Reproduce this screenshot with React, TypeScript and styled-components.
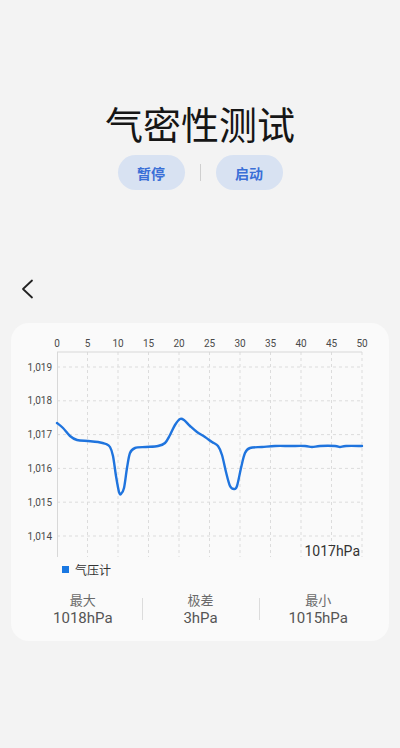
import React from "react";
import styled, { createGlobalStyle } from "styled-components";

const GlobalStyle = createGlobalStyle`
  html, body {
    margin: 0;
    padding: 0;
    background: #f3f3f3;
    font-family: Roboto, "Noto Sans", "Noto Sans CJK SC", sans-serif;
  }
`;

const Page = styled.div`
  width: 400px;
  min-height: 748px;
  display: flex;
  flex-direction: column;
  padding-top: 101px;
  box-sizing: border-box;
`;

const Title = styled.h1`
  margin: 0;
  text-align: center;
  font-family: "Noto Sans CJK SC", sans-serif;
  font-weight: 400;
  font-size: 38px;
  line-height: 44px;
  color: #161616;
`;

const Actions = styled.div`
  margin-top: 10px;
  display: flex;
  justify-content: center;
  align-items: center;
  gap: 15px;
`;

const Pill = styled.button`
  width: 67px;
  height: 35px;
  border: none;
  border-radius: 18px;
  background: #d8e2f2;
  color: #3a6fd7;
  font-family: "Noto Sans CJK SC", sans-serif;
  font-weight: 700;
  font-size: 14px;
  padding: 0;
`;

const Sep = styled.span`
  width: 1px;
  height: 17px;
  background: #cfcfcf;
`;

const Back = styled.button`
  margin: 87px 0 0 17px;
  width: 20px;
  height: 24px;
  padding: 0;
  border: none;
  background: transparent;
  display: flex;
  align-items: center;
  justify-content: center;
  color: #222;
`;

const Card = styled.section`
  margin: 22px 11px 0;
  background: #fafafa;
  border-radius: 18px;
  padding-bottom: 13px;
  display: flex;
  flex-direction: column;
`;

const Legend = styled.div`
  display: flex;
  align-items: center;
  gap: 6px;
  height: 20px;
  padding-left: 51px;
  font-family: "Noto Sans CJK SC", sans-serif;
  font-size: 12px;
  color: #333;
`;

const Swatch = styled.span`
  width: 7px;
  height: 7px;
  background: #1a78e2;
`;

const Stats = styled.div`
  margin-top: 12px;
  display: grid;
  grid-template-columns: 1fr 1fr 1fr;
  padding: 0 12px 0 13px;
`;

const Stat = styled.div<{ $divider?: boolean }>`
  display: flex;
  flex-direction: column;
  align-items: center;
  position: relative;
  ${(p) =>
    p.$divider &&
    `
    &::before {
      content: "";
      position: absolute;
      left: 0;
      top: 7px;
      width: 1px;
      height: 22px;
      background: #dcdcdc;
    }
  `}
`;

const StatLabel = styled.span`
  font-family: "Noto Sans CJK SC", sans-serif;
  font-size: 13px;
  line-height: 18px;
  color: #6a6a6a;
`;

const StatValue = styled.span`
  font-size: 15px;
  line-height: 19px;
  color: #555;
`;

const pts: [number, number][] = [
  [57, 423], [63, 428], [70, 436], [77, 440], [88, 441], [98, 442], [106, 444],
  [110, 447], [113, 456], [116, 476], [119, 492], [121, 494], [124, 488],
  [127, 468], [130, 453], [135, 448], [146, 447], [158, 446], [165, 443],
  [170, 435], [175, 425], [180, 419], [184, 420], [190, 426], [197, 432],
  [205, 437], [212, 442], [218, 446], [222, 455], [226, 472], [230, 486],
  [234, 489], [237, 486], [241, 468], [245, 453], [250, 448], [262, 447],
  [275, 446], [290, 446], [305, 446], [312, 447], [320, 446], [335, 446],
  [340, 447], [346, 446], [362, 446],
];

function smooth(p: [number, number][]) {
  let d = `M${p[0][0]} ${p[0][1]}`;
  for (let i = 0; i < p.length - 1; i++) {
    const p0 = p[i - 1] || p[i];
    const p1 = p[i];
    const p2 = p[i + 1];
    const p3 = p[i + 2] || p2;
    const c1x = p1[0] + (p2[0] - p0[0]) / 6;
    const c1y = p1[1] + (p2[1] - p0[1]) / 6;
    const c2x = p2[0] - (p3[0] - p1[0]) / 6;
    const c2y = p2[1] - (p3[1] - p1[1]) / 6;
    d += ` C${c1x.toFixed(1)} ${c1y.toFixed(1)} ${c2x.toFixed(1)} ${c2y.toFixed(1)} ${p2[0]} ${p2[1]}`;
  }
  return d;
}

const xTicks = [0, 5, 10, 15, 20, 25, 30, 35, 40, 45, 50];
const yTicks = [1019, 1018, 1017, 1016, 1015, 1014];
const xOf = (t: number) => 57 + (t / 50) * 305;
const yOf = (v: number) => 367 + (1019 - v) * 33.8;

function Chart() {
  return (
    <svg width="378" height="236" viewBox="11 323 378 236">
      {xTicks.map((t) => (
        <g key={t}>
          <text x={xOf(t)} y={347} fontSize="10" fill="#4a4a4a" textAnchor="middle" fontFamily="Roboto, sans-serif">
            {t}
          </text>
          {t > 0 && (
            <line x1={xOf(t)} y1={352} x2={xOf(t)} y2={557} stroke="#dcdcdc" strokeDasharray="3 3" />
          )}
        </g>
      ))}
      {yTicks.map((v) => (
        <g key={v}>
          <text x={52} y={yOf(v) + 3.5} fontSize="10" fill="#4a4a4a" textAnchor="end" fontFamily="Roboto, sans-serif">
            {v.toLocaleString("en-US")}
          </text>
          <line x1={57} y1={yOf(v)} x2={362} y2={yOf(v)} stroke="#dcdcdc" strokeDasharray="3 3" />
        </g>
      ))}
      <line x1={57} y1={352} x2={362} y2={352} stroke="#d8d8d8" />
      <line x1={57.5} y1={352} x2={57.5} y2={557} stroke="#d8d8d8" />
      <path d={smooth(pts)} fill="none" stroke="#1f74de" strokeWidth="2.4" strokeLinejoin="round" strokeLinecap="round" />
      <text x={360} y={556} fontSize="14" fill="#333" textAnchor="end" fontFamily="Roboto, sans-serif">
        1017hPa
      </text>
    </svg>
  );
}

export default function App() {
  return (
    <>
      <GlobalStyle />
      <Page>
        <Title>气密性测试</Title>
        <Actions>
          <Pill>暂停</Pill>
          <Sep />
          <Pill>启动</Pill>
        </Actions>
        <Back aria-label="返回">
          <svg width="14" height="20" viewBox="0 0 14 20">
            <path d="M12 1.5 L3 10 L12 18.5" fill="none" stroke="currentColor" strokeWidth="1.8" strokeLinecap="round" strokeLinejoin="round" />
          </svg>
        </Back>
        <Card>
          <Chart />
          <Legend>
            <Swatch />
            气压计
          </Legend>
          <Stats>
            <Stat>
              <StatLabel>最大</StatLabel>
              <StatValue>1018hPa</StatValue>
            </Stat>
            <Stat $divider>
              <StatLabel>极差</StatLabel>
              <StatValue>3hPa</StatValue>
            </Stat>
            <Stat $divider>
              <StatLabel>最小</StatLabel>
              <StatValue>1015hPa</StatValue>
            </Stat>
          </Stats>
        </Card>
      </Page>
    </>
  );
}
